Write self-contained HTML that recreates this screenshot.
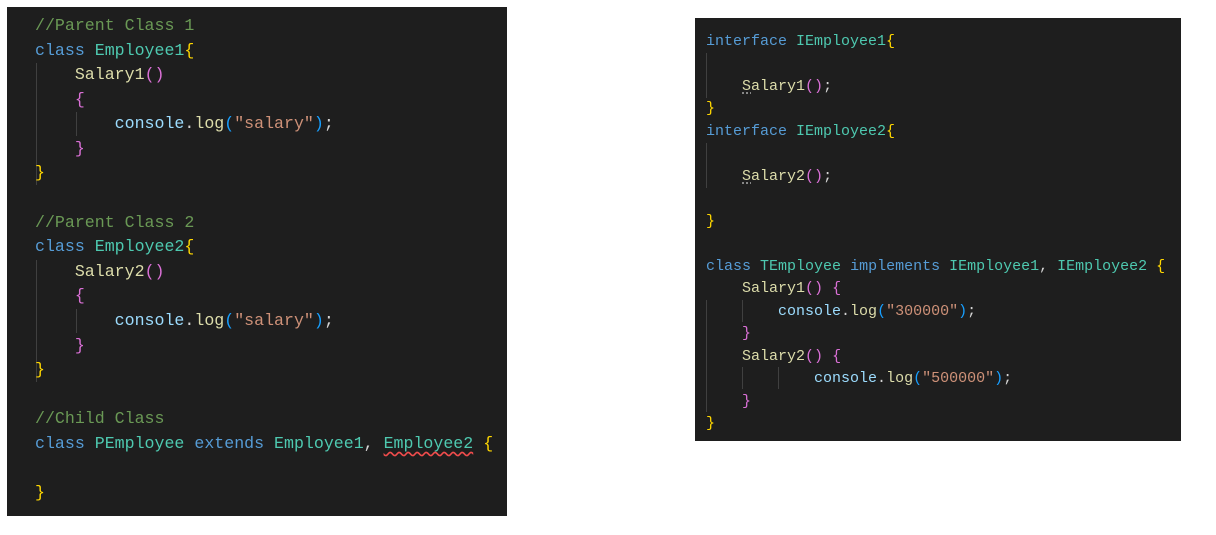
<!DOCTYPE html>
<html><head><meta charset="utf-8"><style>
body{margin:0;width:1216px;height:535px;background:#fff;position:relative;overflow:hidden}
.p{position:absolute;background:#1e1e1e}
.c{position:absolute;font-family:"Liberation Mono",monospace;white-space:pre;color:#d4d4d4}
#L .c{font-size:16.6px;line-height:24.58px;left:28px;top:7px}
#R .c{font-size:15px;line-height:22.47px;left:11px;top:13px}
.g{position:absolute;width:1px;background:#404040}
.cm{color:#6a9955}.k{color:#569cd6}.t{color:#4ec9b0}.f{color:#dcdcaa}.y{color:#ffd700}.m{color:#da70d6}.b{color:#179fff}.s{color:#ce9178}.v{color:#9cdcfe}
.sq{text-decoration:underline wavy #f14c4c;text-underline-offset:3px}
.dt{text-decoration:underline dotted #aaa;text-underline-offset:3px}
</style></head><body>
<div class="p" id="L" style="left:7px;top:7px;width:500px;height:509px">
<div class="g" style="left:29px;top:56px;height:122px"></div>
<div class="g" style="left:69px;top:105px;height:24px"></div>
<div class="g" style="left:29px;top:253px;height:122px"></div>
<div class="g" style="left:69px;top:302px;height:24px"></div>
<div class="c"><span class="cm">//Parent Class 1</span>
<span class="k">class</span> <span class="t">Employee1</span><span class="y">{</span>
    <span class="f">Salary1</span><span class="m">()</span>
    <span class="m">{</span>
        <span class="v">console</span>.<span class="f">log</span><span class="b">(</span><span class="s">"salary"</span><span class="b">)</span>;
    <span class="m">}</span>
<span class="y">}</span>

<span class="cm">//Parent Class 2</span>
<span class="k">class</span> <span class="t">Employee2</span><span class="y">{</span>
    <span class="f">Salary2</span><span class="m">()</span>
    <span class="m">{</span>
        <span class="v">console</span>.<span class="f">log</span><span class="b">(</span><span class="s">"salary"</span><span class="b">)</span>;
    <span class="m">}</span>
<span class="y">}</span>

<span class="cm">//Child Class</span>
<span class="k">class</span> <span class="t">PEmployee</span> <span class="k">extends</span> <span class="t">Employee1</span>, <span class="t sq">Employee2</span> <span class="y">{</span>

<span class="y">}</span></div>
</div>
<div class="p" id="R" style="left:695px;top:18px;width:486px;height:423px">
<div class="g" style="left:11px;top:35px;height:45px"></div>
<div class="g" style="left:11px;top:125px;height:45px"></div>
<div class="g" style="left:11px;top:282px;height:112px"></div>
<div class="g" style="left:47px;top:282px;height:22px"></div>
<div class="g" style="left:47px;top:349px;height:22px"></div>
<div class="g" style="left:83px;top:349px;height:22px"></div>
<div class="c"><span class="k">interface</span> <span class="t">IEmployee1</span><span class="y">{</span>

    <span class="f"><span class="dt">S</span>alary1</span><span class="m">()</span>;
<span class="y">}</span>
<span class="k">interface</span> <span class="t">IEmployee2</span><span class="y">{</span>

    <span class="f"><span class="dt">S</span>alary2</span><span class="m">()</span>;

<span class="y">}</span>

<span class="k">class</span> <span class="t">TEmployee</span> <span class="k">implements</span> <span class="t">IEmployee1</span>, <span class="t">IEmployee2</span> <span class="y">{</span>
    <span class="f">Salary1</span><span class="m">()</span> <span class="m">{</span>
        <span class="v">console</span>.<span class="f">log</span><span class="b">(</span><span class="s">"300000"</span><span class="b">)</span>;
    <span class="m">}</span>
    <span class="f">Salary2</span><span class="m">()</span> <span class="m">{</span>
            <span class="v">console</span>.<span class="f">log</span><span class="b">(</span><span class="s">"500000"</span><span class="b">)</span>;
    <span class="m">}</span>
<span class="y">}</span></div>
</div>
</body></html>
